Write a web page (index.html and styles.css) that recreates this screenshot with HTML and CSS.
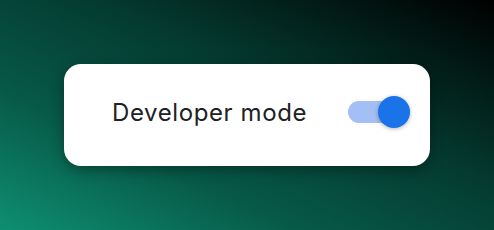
FILE: index.html
```html
<!DOCTYPE html>
<html>
<head>
<meta charset="utf-8">
<link rel="stylesheet" href="styles.css">
</head>
<body>
<div class="stage">
  <div class="card">
    <span class="label">Developer mode</span>
    <div class="toggle">
      <div class="track"></div>
      <div class="knob"></div>
    </div>
  </div>
</div>
</body>
</html>
```
FILE: styles.css
```css
html, body {
  margin: 0;
  padding: 0;
  width: 494px;
  height: 230px;
  overflow: hidden;
}
.stage {
  width: 494px;
  height: 230px;
  display: flex;
  align-items: center;
  justify-content: center;
  background: linear-gradient(to top right, #0e8f72 0%, #075a48 30%, #043a30 60%, #000 100%);
}
.card {
  box-sizing: border-box;
  width: 366px;
  height: 102px;
  background: #fff;
  border-radius: 17px;
  display: flex;
  align-items: center;
  justify-content: space-between;
  padding: 0 20px 6px 48px;
  box-shadow: 0 4px 14px rgba(0, 0, 0, 0.35);
}
.label {
  font-family: Inter, "Noto Sans", sans-serif;
  font-size: 24px;
  letter-spacing: 0.6px;
  color: #202124;
}
.toggle {
  position: relative;
  width: 62px;
  height: 32px;
}
.track {
  position: absolute;
  left: 0;
  top: 5px;
  width: 52px;
  height: 22px;
  border-radius: 11px;
  background: #a3bff4;
}
.knob {
  position: absolute;
  right: 0;
  top: 0;
  width: 32px;
  height: 32px;
  border-radius: 50%;
  background: #1a73e8;
  box-shadow: 0 1px 4px rgba(0, 0, 0, 0.3);
}
```
